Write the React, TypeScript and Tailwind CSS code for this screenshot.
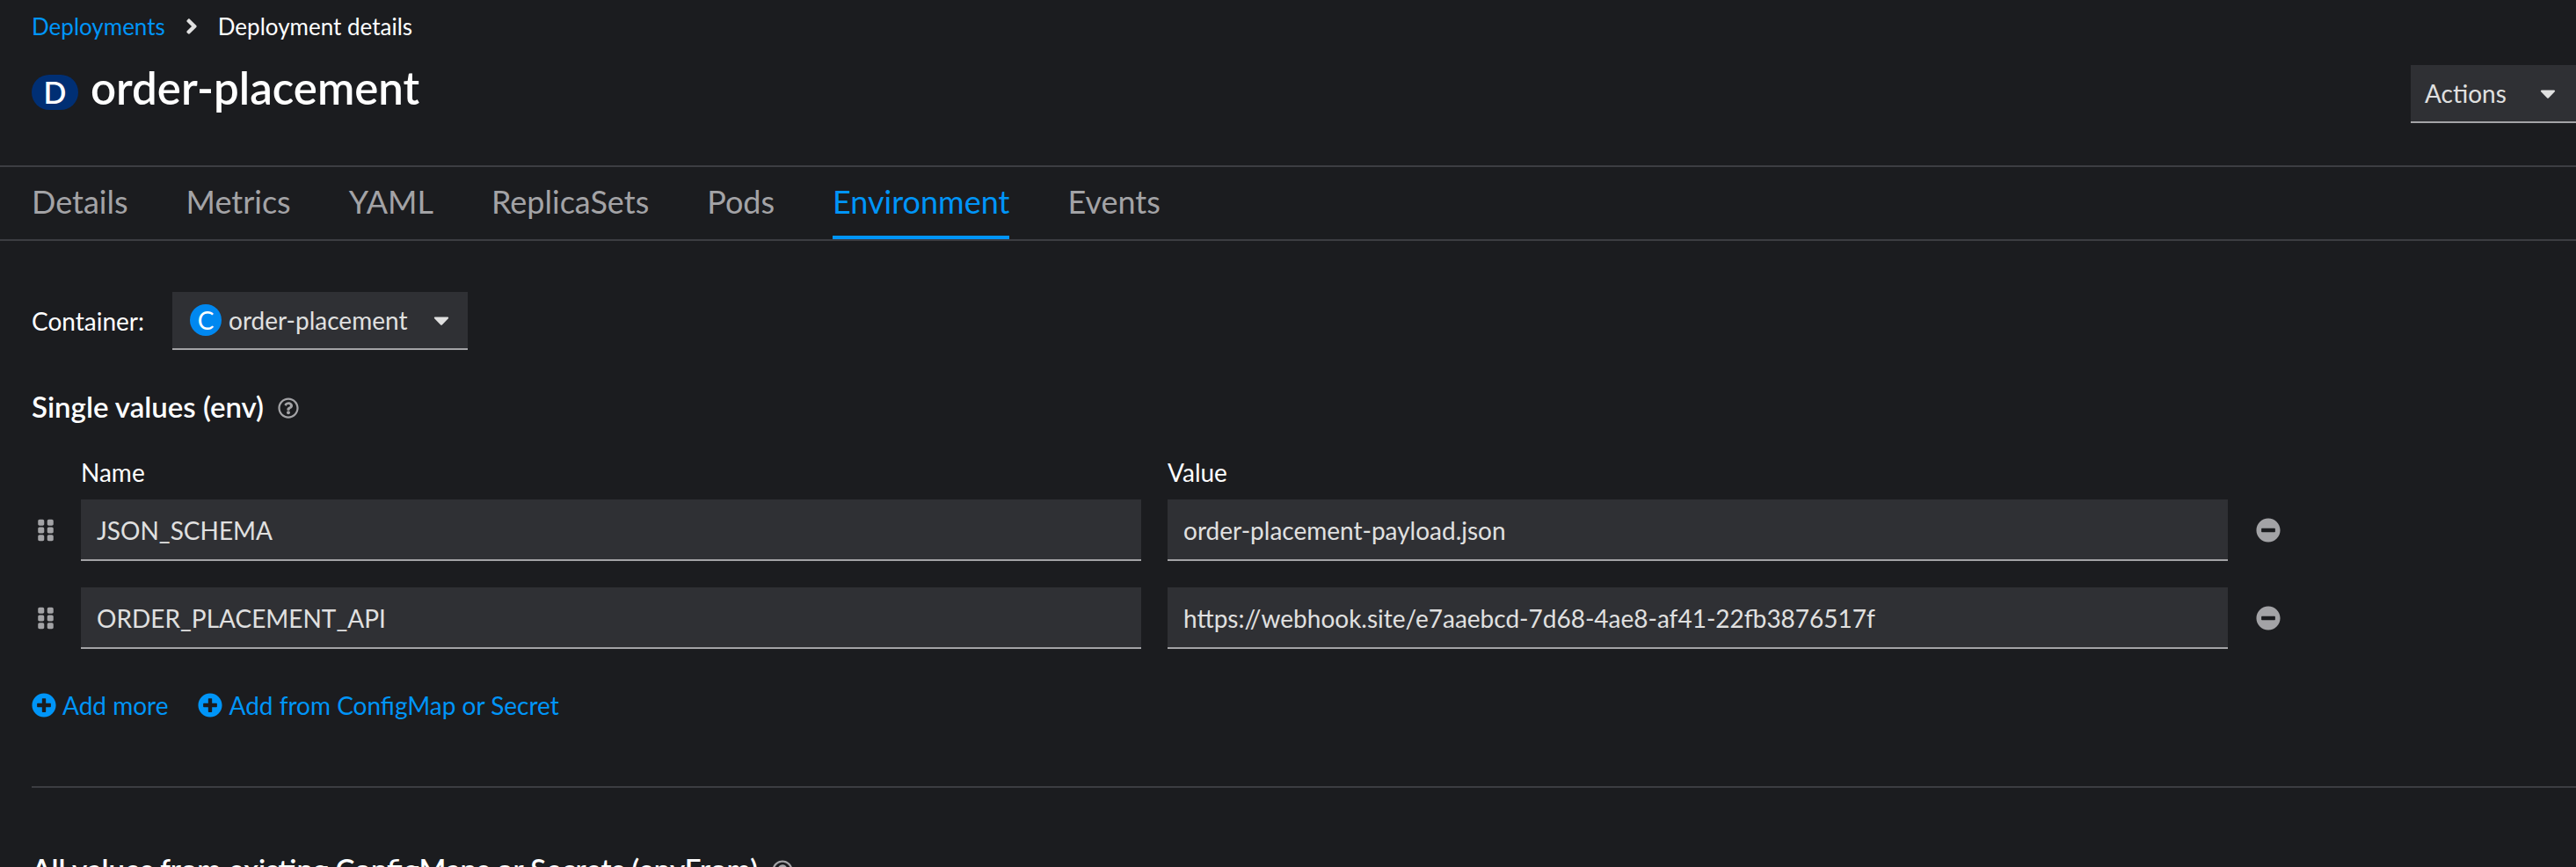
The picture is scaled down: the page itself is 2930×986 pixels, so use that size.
import { useState } from "react";
import {
  FaAngleRight,
  FaCaretDown,
  FaGripVertical,
  FaMinusCircle,
  FaPlusCircle,
  FaRegQuestionCircle,
} from "react-icons/fa";

const TABS = ["Details", "Metrics", "YAML", "ReplicaSets", "Pods", "Environment", "Events"];

const INITIAL_ENV = [
  { name: "JSON_SCHEMA", value: "order-placement-payload.json" },
  {
    name: "ORDER_PLACEMENT_API",
    value: "https://webhook.site/e7aaebcd-7d68-4ae8-af41-22fb3876517f",
  },
];

const ROW = "grid grid-cols-[26px_10fr_10fr_3fr] items-center gap-x-[30px] pr-1";
const FIELD =
  "h-[70px] w-full min-w-0 border-b-2 border-[#a3a3a6] bg-[#2f3034] px-[18px] pt-0.5 text-[28px] text-[#e0e0e0] outline-none";

function SectionTitle({ children }: { children: string }) {
  return (
    <div className="flex items-center gap-4">
      <h2 className="text-[33px] leading-10 font-semibold text-white">{children}</h2>
      <button type="button" aria-label={`Help for ${children}`} className="pt-1 text-[#a3a3a6]">
        <FaRegQuestionCircle className="size-6" />
      </button>
    </div>
  );
}

export default function App() {
  const [active, setActive] = useState("Environment");
  const [env, setEnv] = useState(INITIAL_ENV);

  const update = (index: number, key: "name" | "value", text: string) =>
    setEnv(env.map((row, i) => (i === index ? { ...row, [key]: text } : row)));

  return (
    <div className="h-screen overflow-hidden bg-[#1b1c1f] font-['Lato','Open_Sans',sans-serif] text-[28px] leading-10 text-white">
      <header className="border-b-2 border-[#3c3d42] pb-12 pl-9">
        <nav aria-label="Breadcrumb" className="pt-2.5">
          <ol className="flex items-center text-[26px]">
            <li>
              <a href="#deployments" className="text-[#0095f8]">
                Deployments
              </a>
            </li>
            <li aria-hidden="true" className="px-4 text-[#e0e0e0]">
              <FaAngleRight className="size-7" />
            </li>
            <li aria-current="page">Deployment details</li>
          </ol>
        </nav>
        <div className="mt-6 flex items-start justify-between">
          <h1 className="flex items-center gap-[14px] text-[51px] leading-[52px] font-semibold">
            <span className="mt-2.5 flex h-10 w-[53px] items-center justify-center rounded-full bg-[#002f74] text-[34px]">
              D
            </span>
            order-placement
          </h1>
          <button
            type="button"
            aria-haspopup="menu"
            className="flex h-[66px] w-[188px] items-center justify-between border-b-2 border-[#a3a3a6] bg-[#2f3034] pr-[18px] pl-4 text-[#e0e0e0]"
          >
            Actions
            <FaCaretDown />
          </button>
        </div>
      </header>

      <nav aria-label="Deployment sections" className="border-b-2 border-[#3c3d42] pl-9">
        <ul className="flex gap-[66px] text-[36px]">
          {TABS.map((tab) => (
            <li key={tab}>
              <button
                type="button"
                onClick={() => setActive(tab)}
                className={
                  tab === active
                    ? "h-[82px] border-b-4 border-[#0095f8] text-[#0095f8]"
                    : "h-[82px] border-b-4 border-transparent text-[#a3a3a6]"
                }
              >
                {tab}
              </button>
            </li>
          ))}
        </ul>
      </nav>

      <main className="pt-[58px] pl-9">
        <div className="flex items-center gap-8">
          <label htmlFor="container">Container:</label>
          <div className="flex h-[66px] items-center border-b-2 border-[#a3a3a6] bg-[#2f3034] pr-4 pl-5">
            <span className="flex size-9 items-center justify-center rounded-full bg-[#0088f0]">
              C
            </span>
            <select
              id="container"
              className="ml-2 appearance-none bg-transparent text-[#e0e0e0] outline-none"
            >
              <option>order-placement</option>
            </select>
            <FaCaretDown className="ml-6 text-[#e0e0e0]" />
          </div>
        </div>

        <section className="mt-11">
          <SectionTitle>Single values (env)</SectionTitle>
          <div className={`${ROW} mt-[35px] mb-[11px]`}>
            <span id="env-name" className="col-start-2">
              Name
            </span>
            <span id="env-value">Value</span>
          </div>
          <div className="flex flex-col gap-[30px]">
            {env.map((row, i) => (
              <div key={i} className={ROW}>
                <button
                  type="button"
                  aria-label="Drag to reorder"
                  className="flex pl-0.5 text-[#a3a3a6]"
                >
                  <FaGripVertical className="shrink-0" />
                </button>
                <input
                  aria-labelledby="env-name"
                  value={row.name}
                  onChange={(e) => update(i, "name", e.target.value)}
                  className={FIELD}
                />
                <input
                  aria-labelledby="env-value"
                  value={row.value}
                  onChange={(e) => update(i, "value", e.target.value)}
                  className={FIELD}
                />
                <button
                  type="button"
                  aria-label={`Remove ${row.name}`}
                  onClick={() => setEnv(env.filter((_, j) => j !== i))}
                  className="justify-self-start pl-0.5 text-[#a3a3a6]"
                >
                  <FaMinusCircle />
                </button>
              </div>
            ))}
          </div>
          <div className="mt-11 flex gap-[34px] text-[#0095f8]">
            <button
              type="button"
              onClick={() => setEnv([...env, { name: "", value: "" }])}
              className="flex items-center gap-[7px]"
            >
              <FaPlusCircle />
              Add more
            </button>
            <button type="button" className="flex items-center gap-[7px]">
              <FaPlusCircle />
              Add from ConfigMap or Secret
            </button>
          </div>
        </section>

        <hr className="mt-[72px] border-t-2 border-[#3c3d42]" />

        <section className="mt-[72px]">
          <SectionTitle>All values from existing ConfigMaps or Secrets (envFrom)</SectionTitle>
        </section>
      </main>
    </div>
  );
}
